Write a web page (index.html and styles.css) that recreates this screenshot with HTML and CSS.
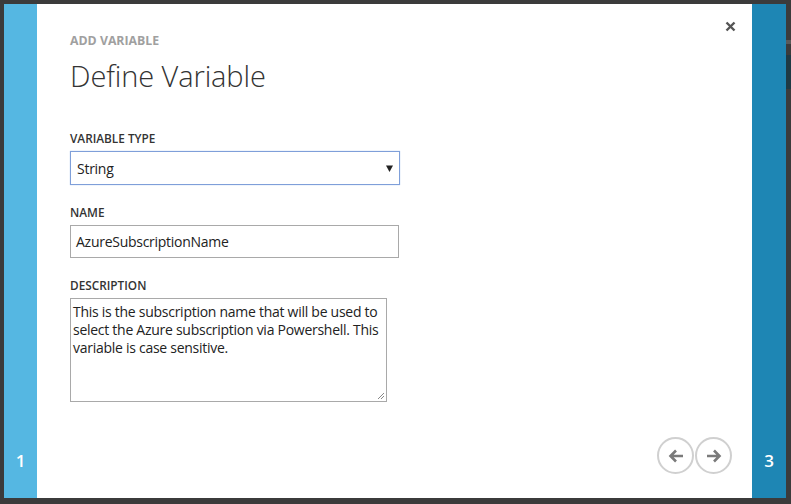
FILE: index.html
```html
<!DOCTYPE html>
<html>
<head>
<meta charset="utf-8">
<link rel="stylesheet" href="styles.css">
</head>
<body>
<div class="frame">
  <div class="band band-left"><span class="step">1</span></div>
  <div class="panel">
    <button class="close" aria-label="close">
      <svg width="11" height="11" viewBox="0 0 11 11"><path d="M1.5 1.5 L9.5 9.5 M9.5 1.5 L1.5 9.5" stroke="#555" stroke-width="2.4" stroke-linecap="butt"/></svg>
    </button>
    <div class="eyebrow">ADD VARIABLE</div>
    <h1 class="title">Define Variable</h1>
    <div class="field">
      <label class="label">VARIABLE TYPE</label>
      <div class="select">
        <span>String</span>
        <svg class="caret" width="7" height="7" viewBox="0 0 7 7"><path d="M0 0.5 H7 L3.5 7 Z" fill="#222"/></svg>
      </div>
    </div>
    <div class="field">
      <label class="label">NAME</label>
      <div class="input">AzureSubscriptionName</div>
    </div>
    <div class="field">
      <label class="label">DESCRIPTION</label>
      <div class="textarea">This is the subscription name that will be used to select the Azure subscription via Powershell. This variable is case sensitive.
        <svg class="grip" width="8" height="8" viewBox="0 0 8 8"><path d="M7 1 L1 7 M7 4 L4 7" stroke="#888" stroke-width="1"/></svg>
      </div>
    </div>
    <div class="nav">
      <span class="circle">
        <svg width="16" height="14" viewBox="0 0 16 14"><path d="M15 7 H3 M8 1.5 L2.5 7 L8 12.5" stroke="#7a7a7a" stroke-width="2.6" fill="none"/></svg>
      </span>
      <span class="circle">
        <svg width="16" height="14" viewBox="0 0 16 14"><path d="M1 7 H13 M8 1.5 L13.5 7 L8 12.5" stroke="#7a7a7a" stroke-width="2.6" fill="none"/></svg>
      </span>
    </div>
  </div>
  <div class="band band-right"><span class="step">3</span></div>
  <div class="edge">
    <div class="edge-line"></div>
    <div class="edge-block"></div>
  </div>
</div>
</body>
</html>
```

FILE: styles.css
```css
html, body {
  margin: 0;
  padding: 0;
  background: #3b3b3b;
}
body {
  width: 791px;
  height: 504px;
  overflow: hidden;
  font-family: "Open Sans", "Noto Sans", sans-serif;
}
.frame {
  display: flex;
  height: 494px;
  padding: 4px 0 6px 4px;
}
.band {
  display: flex;
  align-items: flex-end;
  justify-content: center;
  color: #fff;
  font-size: 17px;
  font-weight: 600;
}
.band-left {
  width: 33px;
  background: #55b7e2;
}
.band-right {
  width: 34px;
  background: #1e86b4;
}
.step {
  margin-bottom: 26px;
}
.panel {
  position: relative;
  width: 682px;
  background: #fff;
  padding: 0 0 0 33px;
}
.close {
  position: absolute;
  top: 17px;
  right: 16px;
  border: 0;
  background: none;
  padding: 0;
  width: 11px;
  height: 11px;
}
.close svg { display: block; }
.eyebrow {
  margin-top: 29px;
  font-size: 12.3px;
  font-weight: 700;
  color: #a0a0a0;
  line-height: 16px;
}
.title {
  margin: 8px 0 0 0;
  font-size: 29px;
  font-weight: 300;
  color: #333;
  line-height: 38px;
  letter-spacing: -0.1px;
}
.field {
  margin-top: 19px;
}
.title + .field { margin-top: 35px; }
.label {
  display: block;
  font-size: 11.8px;
  font-weight: 600;
  color: #333;
  line-height: 16px;
  margin-bottom: 5px;
}
.select {
  box-sizing: border-box;
  width: 330px;
  height: 34px;
  border: 1px solid #7f9fd9;
  box-shadow: 0 0 1px #a8c0ec;
  display: flex;
  align-items: center;
  justify-content: space-between;
  padding: 0 6px 0 6px;
  font-size: 14px;
  letter-spacing: -0.27px;
  color: #222;
}
.input {
  box-sizing: border-box;
  width: 329px;
  height: 33px;
  border: 1px solid #a9a9a9;
  display: flex;
  align-items: center;
  padding: 0 5px;
  font-size: 14px;
  color: #222;
  letter-spacing: -0.27px;
}
.textarea {
  position: relative;
  box-sizing: border-box;
  width: 317px;
  height: 104px;
  border: 1px solid #a9a9a9;
  padding: 4px 2px;
  font-size: 14px;
  line-height: 18px;
  color: #222;
  letter-spacing: -0.27px;
}
.grip {
  position: absolute;
  right: 1px;
  bottom: 1px;
}
.nav {
  position: absolute;
  right: 20px;
  bottom: 24px;
  display: flex;
  gap: 1px;
}
.circle {
  box-sizing: border-box;
  width: 37px;
  height: 37px;
  border: 2px solid #d0d0d0;
  border-radius: 50%;
  display: flex;
  align-items: center;
  justify-content: center;
}
.edge {
  flex: 1;
  background: #3b3b3b;
  position: relative;
}
.edge-line {
  margin-top: 36px;
  height: 4px;
  background: #5a5a5a;
}
.edge-block {
  margin-top: 11px;
  height: 34px;
  background: #1f3a44;
}
```
